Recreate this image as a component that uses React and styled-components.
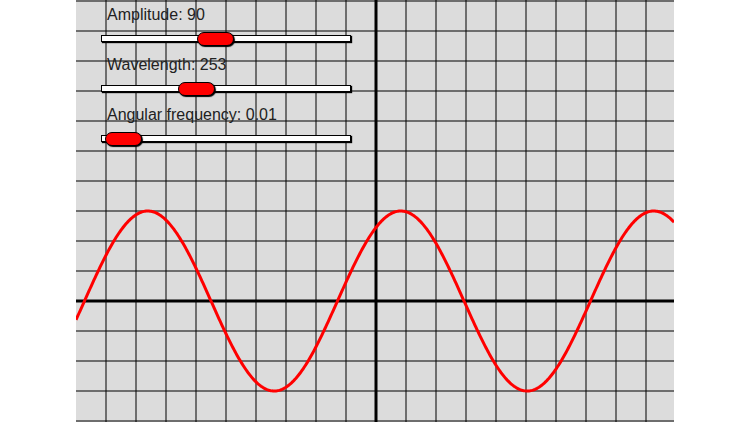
import { useState } from "react";
import styled, { createGlobalStyle } from "styled-components";

const GlobalStyle = createGlobalStyle`
  html, body {
    margin: 0;
    padding: 0;
    background: #fff;
    overflow: hidden;
  }
  body {
    font-family: "Liberation Sans", Arial, sans-serif;
  }
`;

const WIDTH = 598;
const HEIGHT = 600;
const MID_X = 300;
const MID_Y = 301;
const STEP = 30;

function wavePath(amplitude, wavelength, phase) {
  const pts = [];
  for (let x = 0; x <= WIDTH; x += 1) {
    const y = MID_Y - amplitude * Math.sin((2 * Math.PI * (x - phase)) / wavelength);
    pts.push(`${x === 0 ? "M" : "L"}${x} ${y.toFixed(2)}`);
  }
  return pts.join(" ");
}

function Grid() {
  const lines = [];
  for (let x = STEP; x < WIDTH; x += STEP) {
    if (x === MID_X) continue;
    lines.push(<line key={"v" + x} x1={x} y1={0} x2={x} y2={HEIGHT} />);
  }
  for (let y = 1; y < HEIGHT; y += STEP) {
    if (y === MID_Y) continue;
    lines.push(<line key={"h" + y} x1={0} y1={y} x2={WIDTH} y2={y} />);
  }
  return <g stroke="rgba(0,0,0,0.5)" strokeWidth="2">{lines}</g>;
}

function App() {
  const [amplitude, setAmplitude] = useState(90);
  const [wavelength, setWavelength] = useState(253);
  const [frequency, setFrequency] = useState(0.01);

  return (
    <>
      <GlobalStyle />
      <Stage>
        <Canvas width={WIDTH} height={HEIGHT} viewBox={`0 0 ${WIDTH} ${HEIGHT}`}>
          <Grid />
          <line x1={MID_X} y1={0} x2={MID_X} y2={HEIGHT} stroke="#000" strokeWidth="3" />
          <line x1={0} y1={MID_Y} x2={WIDTH} y2={MID_Y} stroke="#000" strokeWidth="3" />
          <path
            d={wavePath(amplitude, wavelength, 261.5)}
            fill="none"
            stroke="#ff0000"
            strokeWidth="3"
          />
        </Canvas>
        <Controls>
          <Group>
            <Label>Amplitude: {amplitude}</Label>
            <Slider
              type="range"
              min="0"
              max="200"
              value={amplitude}
              onChange={(e) => setAmplitude(Number(e.target.value))}
            />
          </Group>
          <Group>
            <Label>Wavelength: {wavelength}</Label>
            <Slider
              type="range"
              min="0"
              max="700"
              value={wavelength}
              onChange={(e) => setWavelength(Number(e.target.value))}
            />
          </Group>
          <Group>
            <Label>Angular frequency: {frequency}</Label>
            <Slider
              type="range"
              min="0"
              max="0.8"
              step="0.01"
              value={frequency}
              onChange={(e) => setFrequency(Number(e.target.value))}
            />
          </Group>
        </Controls>
      </Stage>
    </>
  );
}

const Stage = styled.div`
  position: relative;
  width: ${WIDTH}px;
  height: ${HEIGHT}px;
  margin: 0 auto;
  background: #dcdcdc;
`;

const Canvas = styled.svg`
  display: block;
`;

const Controls = styled.div`
  position: absolute;
  top: 0;
  left: 0;
  padding: 6px 0 0 25px;
  display: flex;
  flex-direction: column;
`;

const Group = styled.div`
  height: 50px;
  display: flex;
  flex-direction: column;
`;

const Label = styled.span`
  font-size: 16px;
  line-height: 18px;
  color: #222;
  margin-left: 6px;
`;

const Slider = styled.input`
  -webkit-appearance: none;
  appearance: none;
  width: 248px;
  height: 5px;
  margin: 11px 0 0 0;
  padding: 0;
  background: #fff;
  border: 1px solid #000;
  box-shadow: 1px 1px 1px #000;
  outline: none;

  &::-webkit-slider-thumb {
    -webkit-appearance: none;
    appearance: none;
    width: 37px;
    height: 14px;
    border-radius: 8px;
    background: #ff0000;
    border: 1px solid #000;
    box-shadow: 1px 1px 1px #000;
    cursor: pointer;
  }
`;

export default App;
